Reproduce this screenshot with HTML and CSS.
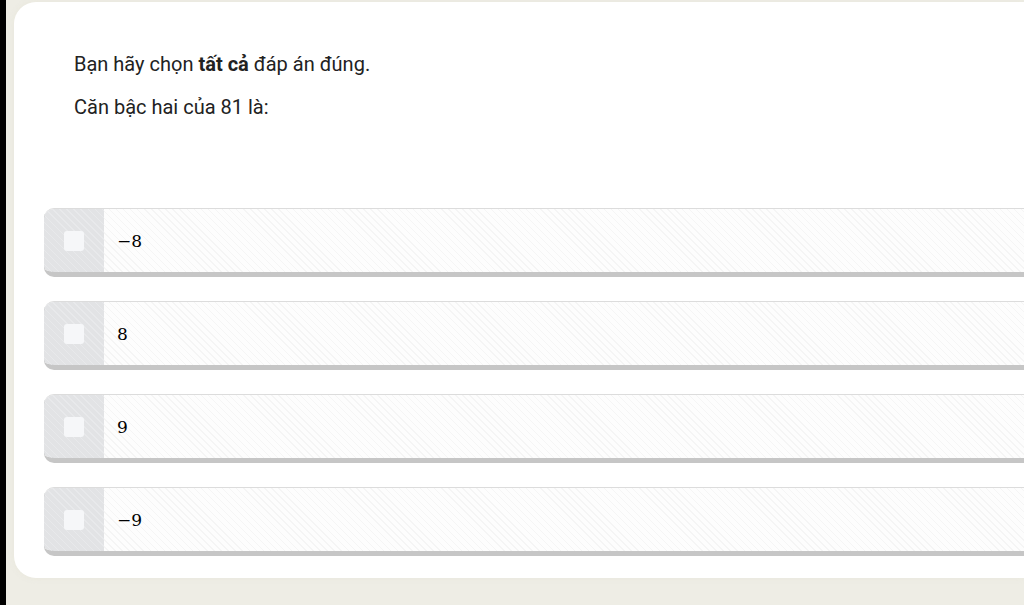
FILE: index.html
```html
<!DOCTYPE html>
<html lang="vi">
<head>
<meta charset="utf-8">
<link rel="stylesheet" href="styles.css">
</head>
<body>
<div class="frame">
  <div class="card">
    <p class="hint">Bạn hãy chọn <b>tất cả</b> đáp án đúng.</p>
    <p class="question">Căn bậc hai của <span class="num">81</span> là:</p>
    <div class="options">
      <div class="option"><div class="check"><span class="box"></span></div><div class="label">−8</div></div>
      <div class="option"><div class="check"><span class="box"></span></div><div class="label">8</div></div>
      <div class="option"><div class="check"><span class="box"></span></div><div class="label">9</div></div>
      <div class="option"><div class="check"><span class="box"></span></div><div class="label">−9</div></div>
    </div>
  </div>
</div>
</body>
</html>
```

FILE: styles.css
```css
* { box-sizing: border-box; }
html, body { margin: 0; padding: 0; }
body {
  width: 1024px;
  height: 605px;
  overflow: hidden;
  background: #000;
  font-family: Roboto, "Noto Sans", sans-serif;
}
.frame {
  margin-left: 6px;
  height: 605px;
  background: #eeede5;
  padding: 2px 0 27px 8px;
}
.card {
  background: #fff;
  border-radius: 22px 0 0 22px;
  height: 576px;
  padding: 50px 0 0 60px;
  box-shadow: 0 0 6px rgba(230, 228, 215, 0.6);
}
.hint, .question {
  margin: 0;
  font-size: 20px;
  color: #222;
  line-height: 24px;
}
.hint b { font-weight: 700; }
.question { margin-top: 19px; }
.options {
  margin: 89px 0 0 -30px;
  display: flex;
  flex-direction: column;
  gap: 24px;
}
.option {
  display: flex;
  height: 69px;
  border-top: 1px solid #dcdcdc;
  border-bottom: 5px solid #c6c6c6;
  border-radius: 10px 0 0 10px;
  overflow: hidden;
  background: #fdfdfd repeating-linear-gradient(45deg, #f5f5f5 0 1px, transparent 1px 5px);
}
.check {
  width: 60px;
  flex: none;
  display: flex;
  align-items: center;
  justify-content: center;
  background: #e2e3e5 repeating-linear-gradient(45deg, #e8e9eb 0 1px, transparent 1px 5px);
  box-shadow: 0 5px 0 #a8a8a8;
}
.box {
  width: 20px;
  height: 20px;
  border-radius: 3px;
  background: #f6f7f9;
}
.label {
  display: flex;
  align-items: center;
  padding-left: 13px;
  font-family: "DejaVu Serif", "Liberation Serif", serif;
  font-size: 17px;
  color: #000;
}
```
